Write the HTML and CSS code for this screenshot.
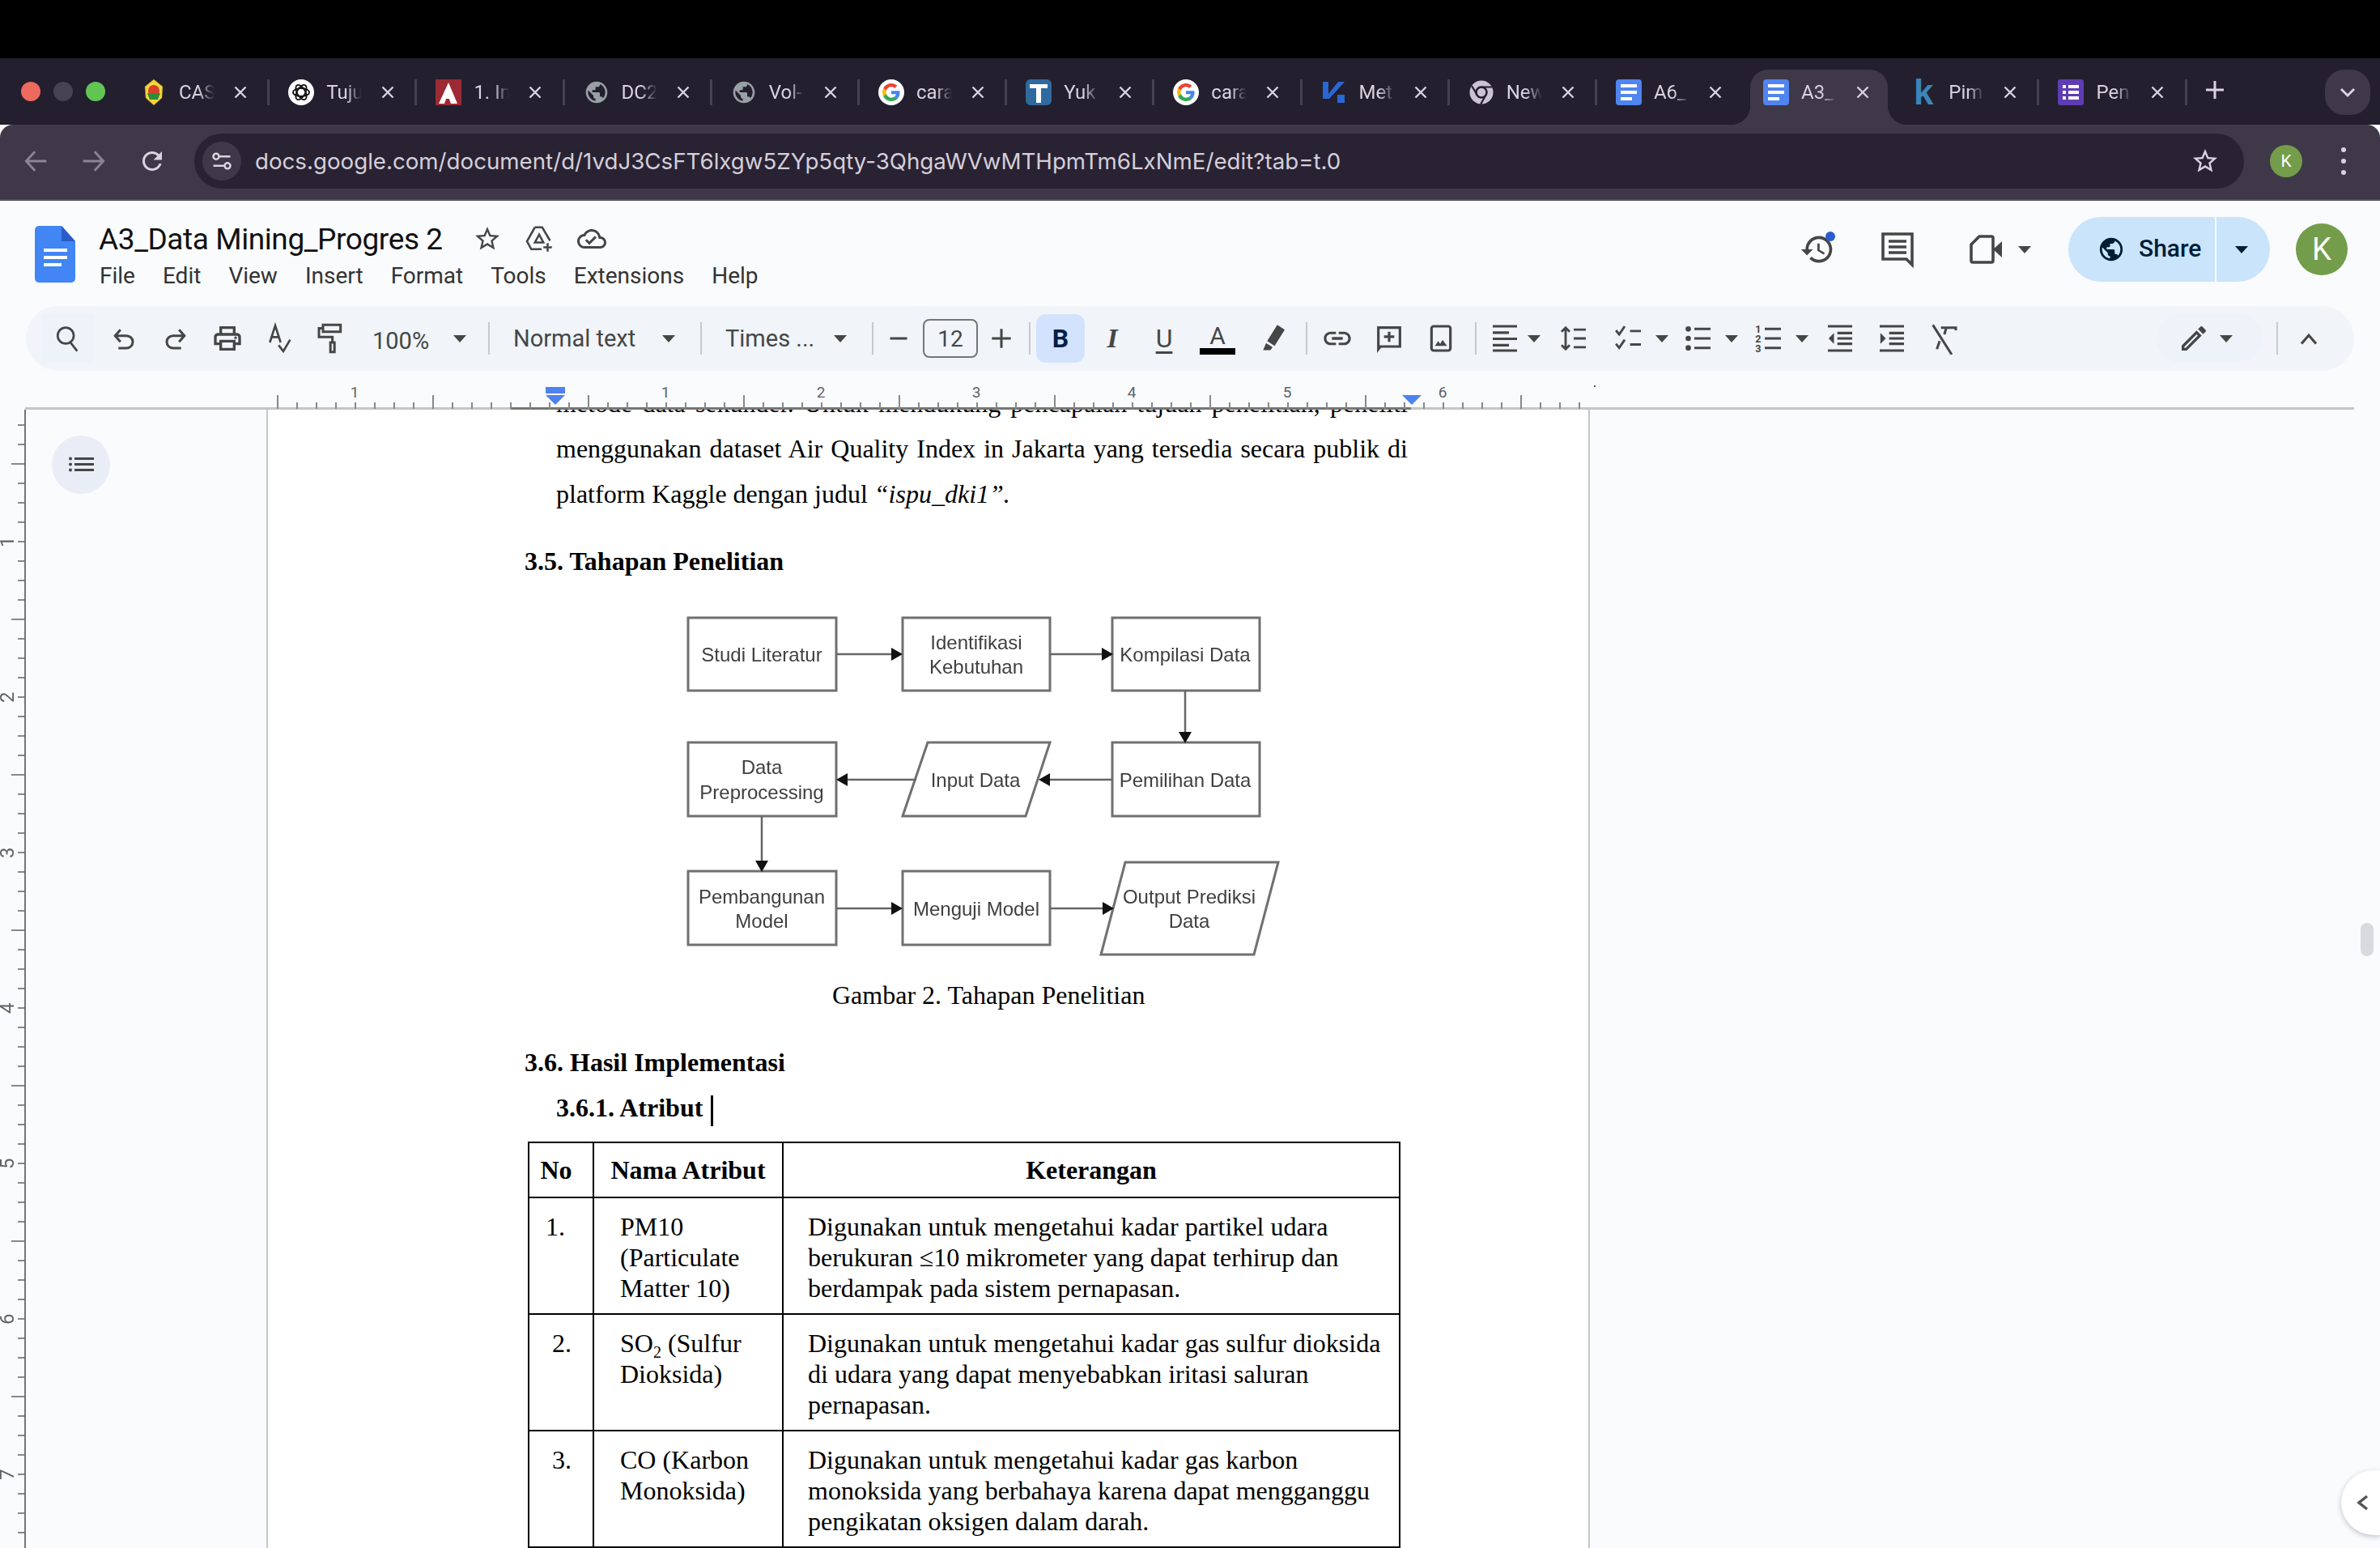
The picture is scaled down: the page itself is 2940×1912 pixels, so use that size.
FILE: index.html
```html
<!DOCTYPE html>
<html>
  <head>
    <title>A3_Data Mining_Progres 2</title>
    <link rel="stylesheet" href="styles.css">
  </head>
  <body>
    <svg class="sprites" width="0" height="0">
      <symbol id="i-public" viewBox="0 0 24 24"><path d="M12 2C6.48 2 2 6.48 2 12s4.48 10 10 10 10-4.48 10-10S17.52 2 12 2zm-1 17.93c-3.95-.49-7-3.85-7-7.93 0-.62.08-1.21.21-1.79L9 15v1c0 1.1.9 2 2 2v1.93zm6.9-2.54c-.26-.81-1-1.39-1.9-1.39h-1v-3c0-.55-.45-1-1-1H8v-2h2c.55 0 1-.45 1-1V7h2c1.1 0 2-.9 2-2v-.41c2.93 1.19 5 4.06 5 7.41 0 2.08-.8 3.97-2.1 5.39z"/></symbol>
      <symbol id="i-star" viewBox="0 0 24 24"><path d="M22 9.24l-7.19-.62L12 2 9.19 8.63 2 9.24l5.46 4.73L5.82 21 12 17.27 18.18 21l-1.63-7.03L22 9.24zM12 15.4l-3.76 2.27 1-4.28-3.32-2.88 4.38-.38L12 6.1l1.71 4.04 4.38.38-3.32 2.88 1 4.28L12 15.4z"/></symbol>
      <symbol id="i-g" viewBox="0 0 48 48"><path fill="#EA4335" d="M24 9.5c3.54 0 6.71 1.22 9.21 3.6l6.85-6.85C35.9 2.38 30.47 0 24 0 14.62 0 6.51 5.38 2.56 13.22l7.98 6.19C12.43 13.72 17.74 9.5 24 9.5z"/><path fill="#4285F4" d="M46.98 24.55c0-1.57-.15-3.09-.38-4.55H24v9.02h12.94c-.58 2.96-2.26 5.48-4.78 7.18l7.73 6c4.51-4.18 7.09-10.36 7.09-17.65z"/><path fill="#FBBC05" d="M10.53 28.59c-.48-1.45-.76-2.99-.76-4.59s.27-3.14.76-4.59l-7.98-6.19C.92 16.46 0 20.12 0 24c0 3.88.92 7.54 2.56 10.78l7.97-6.19z"/><path fill="#34A853" d="M24 48c6.48 0 11.93-2.13 16.12-5.81l-7.73-6c-2.15 1.45-4.92 2.3-8.39 2.3-6.26 0-11.57-4.22-13.47-9.91l-7.98 6.19C6.51 42.62 14.62 48 24 48z"/></symbol>
      <symbol id="i-docfav" viewBox="0 0 32 32"><rect width="32" height="32" rx="4" fill="#5084ee"/><path fill="#fff" d="M6 6h20v4H6zM6 14h20v4H6zM6 22h14v4H6z"/></symbol>
      <symbol id="i-drop" viewBox="0 0 16 9"><path d="M0 0h16L8 9z"/></symbol>
      <symbol id="i-undo" viewBox="0 0 24 24"><path fill="none" stroke="currentColor" stroke-width="1.8" d="M9.5 5.5 5.5 10l4 4.5M5.5 10H14a4.6 4.6 0 0 1 0 9.2H8"/></symbol>
      <symbol id="i-redo" viewBox="0 0 24 24"><path fill="none" stroke="currentColor" stroke-width="1.8" d="M14.5 5.5l4 4.5-4 4.5M18.5 10H10a4.6 4.6 0 0 0 0 9.2h6"/></symbol>
      <symbol id="i-search" viewBox="0 0 24 24"><path fill="none" stroke="currentColor" stroke-width="1.9" d="M10 2.500a7 7 0 1 0 0 14 7 7 0 0 0 0-14zM14.500 16l5.500 7"/></symbol>
      <symbol id="i-print" viewBox="0 0 24 24"><path d="M19 8h-1V3H6v5H5c-1.66 0-3 1.34-3 3v6h4v4h12v-4h4v-6c0-1.66-1.34-3-3-3zM8 5h8v3H8V5zm8 12v2H8v-4h8v2zm2-2v-2H6v2H4v-4c0-.55.45-1 1-1h14c.55 0 1 .45 1 1v4h-2z"/><circle cx="18" cy="11.5" r="1"/></symbol>
      <symbol id="i-spell" viewBox="0 0 24 24"><path fill="none" stroke="currentColor" stroke-width="1.6" d="M5 15 9 2.5 13 15M6.4 11h5.2M11.5 17l3.5 4.5 5-8.5"/></symbol>
      <symbol id="i-paint" viewBox="0 0 24 24"><path fill="none" stroke="currentColor" stroke-width="1.8" d="M6 2h13v5H6zM6 4.5H3v6.5h10v3.5M11.5 15h3v7h-3z"/></symbol>
      <symbol id="i-marker" viewBox="0 0 24 24"><path d="M15.5 2 21 5.5 13.5 17.5 8 14zM7.2 15.5l4.8 3-1.6 2.2H5z"/></symbol>
      <symbol id="i-link" viewBox="0 0 24 24"><path d="M3.9 12c0-1.71 1.39-3.1 3.1-3.1h4V7H7c-2.76 0-5 2.24-5 5s2.24 5 5 5h4v-1.9H7c-1.71 0-3.1-1.39-3.1-3.1zM8 13h8v-2H8v2zm9-6h-4v1.9h4c1.71 0 3.1 1.39 3.1 3.1s-1.39 3.1-3.1 3.1h-4V17h4c2.76 0 5-2.24 5-5s-2.24-5-5-5z"/></symbol>
      <symbol id="i-addcomment" viewBox="0 0 24 24"><path fill="none" stroke="currentColor" stroke-width="1.9" d="M4 4h16v14H5.5L4 20zM12 7v7.5M8.2 10.7h7.6"/></symbol>
      <symbol id="i-image" viewBox="0 0 24 24"><rect x="5" y="3" width="14" height="18" rx="1.6" fill="none" stroke="currentColor" stroke-width="1.9"/><path d="M7.5 17.5 10 14l1.4 2 1.8-3 3.3 4.5z"/></symbol>
      <symbol id="i-align" viewBox="0 0 24 24"><path fill="none" stroke="currentColor" stroke-width="1.9" d="M3 3h18M3 7.7h12M3 12.3h18M3 17h12M3 21h18"/></symbol>
      <symbol id="i-spacing" viewBox="0 0 24 24"><path fill="none" stroke="currentColor" stroke-width="1.7" d="M6 4v16M3 7l3-3 3 3M3 17l3 3 3-3M12 5.5h9M12 12h9M12 18.5h9"/></symbol>
      <symbol id="i-check" viewBox="0 0 24 24"><path fill="none" stroke="currentColor" stroke-width="1.7" d="M2.5 6l2.4 3L9 3M2.5 16l2.4 3L9 13M13 6.5h8M13 16.5h8"/></symbol>
      <symbol id="i-bullet" viewBox="0 0 24 24"><circle cx="4.5" cy="5" r="2"/><circle cx="4.5" cy="12" r="2"/><circle cx="4.5" cy="19" r="2"/><path fill="none" stroke="currentColor" stroke-width="1.8" d="M9 5h12M9 12h12M9 19h12"/></symbol>
      <symbol id="i-outdent" viewBox="0 0 24 24"><path fill="none" stroke="currentColor" stroke-width="1.9" d="M3 3h18M3 21h18M10 8h11M10 12h11M10 16h11"/><path d="M7.5 8v8L3.5 12z"/></symbol>
      <symbol id="i-indent" viewBox="0 0 24 24"><path fill="none" stroke="currentColor" stroke-width="1.9" d="M3 3h18M3 21h18M10 8h11M10 12h11M10 16h11"/><path d="M3.5 8v8l4-4z"/></symbol>
      <symbol id="i-clear" viewBox="0 0 24 24"><path fill="none" stroke="currentColor" stroke-width="1.8" d="M4 2l14 22M10 4h11v2M14 4l-1.5 5M9 14l-2 6"/></symbol>
      <symbol id="i-pencil" viewBox="0 0 24 24"><path d="M14.06 9.02l.92.92L5.92 19H5v-.92l9.06-9.06M17.66 3c-.25 0-.51.1-.7.29l-1.83 1.83 3.75 3.75 1.83-1.83c.39-.39.39-1.02 0-1.41l-2.34-2.34c-.2-.2-.45-.29-.71-.29zm-3.6 3.19L3 17.25V21h3.75L17.81 9.94l-3.75-3.75z"/></symbol>
      <symbol id="i-close" viewBox="0 0 16 16"><path fill="none" stroke="currentColor" stroke-width="2.4" d="M1.5 1.5l13 13M14.5 1.5l-13 13"/></symbol>
    </svg>

    <div class="os-bar"></div>

    <!-- tabs -->
    <div class="tabstrip">
      <div class="lights">
        <span class="light red"></span>
        <span class="light grey"></span>
        <span class="light green"></span>
      </div>
      <div class="tab">
        <svg class="fav" viewBox="0 0 32 32"><path fill="#f2d63c" stroke="#8a7a20" stroke-width=".6" d="M16 0l11 9-1 14-10 9-10-9L5 9z"/><circle cx="16" cy="14" r="7" fill="#d8402c"/><path fill="#2f8a3c" d="M8 17h16l-3 8H11z"/></svg>
        <span class="tab-title">CAS</span>
        <svg class="tab-x"><use href="#i-close"/></svg>
      </div>
      <div class="tab">
        <svg class="fav" viewBox="0 0 32 32"><circle cx="16" cy="16" r="16" fill="#fff"/><g fill="none" stroke="#111" stroke-width="1.8"><ellipse cx="16" cy="16" rx="10" ry="5"/><ellipse cx="16" cy="16" rx="10" ry="5" transform="rotate(60 16 16)"/><ellipse cx="16" cy="16" rx="10" ry="5" transform="rotate(120 16 16)"/></g></svg>
        <span class="tab-title">Tuju</span>
        <svg class="tab-x"><use href="#i-close"/></svg>
      </div>
      <div class="tab">
        <svg class="fav" viewBox="0 0 32 32"><rect width="32" height="32" fill="#9c2a34"/><path fill="#fff" d="M16 4l11 26h-8l-2.2-6H10l3-6h2l1-3-5 15H4z"/></svg>
        <span class="tab-title">1. In</span>
        <svg class="tab-x"><use href="#i-close"/></svg>
      </div>
      <div class="tab">
        <svg class="fav globe"><use href="#i-public"/></svg>
        <span class="tab-title">DC2</span>
        <svg class="tab-x"><use href="#i-close"/></svg>
      </div>
      <div class="tab">
        <svg class="fav globe"><use href="#i-public"/></svg>
        <span class="tab-title">Vol-</span>
        <svg class="tab-x"><use href="#i-close"/></svg>
      </div>
      <div class="tab">
        <svg class="fav" viewBox="0 0 32 32"><circle cx="16" cy="16" r="16" fill="#fff"/><use href="#i-g" x="5" y="5" width="22" height="22"/></svg>
        <span class="tab-title">cara</span>
        <svg class="tab-x"><use href="#i-close"/></svg>
      </div>
      <div class="tab">
        <svg class="fav" viewBox="0 0 32 32"><rect width="32" height="32" rx="6" fill="#2f6a9e"/><path fill="#fff" d="M5 6h22v5h-8v18h-6V11H5z"/></svg>
        <span class="tab-title">Yuk</span>
        <svg class="tab-x"><use href="#i-close"/></svg>
      </div>
      <div class="tab">
        <svg class="fav" viewBox="0 0 32 32"><circle cx="16" cy="16" r="16" fill="#fff"/><use href="#i-g" x="5" y="5" width="22" height="22"/></svg>
        <span class="tab-title">cara</span>
        <svg class="tab-x"><use href="#i-close"/></svg>
      </div>
      <div class="tab">
        <svg class="fav" viewBox="0 0 32 32"><path fill="#2a66d4" d="M2 3h7v15l12-15h8L10 24H2zM20 19h9v10h-9z"/></svg>
        <span class="tab-title">Met</span>
        <svg class="tab-x"><use href="#i-close"/></svg>
      </div>
      <div class="tab">
        <svg class="fav" viewBox="0 0 32 32"><circle cx="16" cy="16" r="14.5" fill="#c9c3d5"/><circle cx="16" cy="16" r="6.5" fill="#c9c3d5" stroke="#231f2e" stroke-width="2.5"/><path stroke="#231f2e" stroke-width="2.2" d="M16 9.5h13M21 20l-6 11M10.5 19L4 8"/></svg>
        <span class="tab-title">New</span>
        <svg class="tab-x"><use href="#i-close"/></svg>
      </div>
      <div class="tab no-sep">
        <svg class="fav"><use href="#i-docfav"/></svg>
        <span class="tab-title">A6_</span>
        <svg class="tab-x"><use href="#i-close"/></svg>
      </div>
      <div class="tab active">
        <svg class="fav"><use href="#i-docfav"/></svg>
        <span class="tab-title">A3_</span>
        <svg class="tab-x"><use href="#i-close"/></svg>
      </div>
      <div class="tab">
        <span class="fav fav-k">k</span>
        <span class="tab-title">Pim</span>
        <svg class="tab-x"><use href="#i-close"/></svg>
      </div>
      <div class="tab">
        <svg class="fav" viewBox="0 0 32 32"><rect width="32" height="32" rx="3" fill="#5e3db3"/><path fill="#fff" d="M6 7h4v4H6zM13 7h13v4H13zM6 14h4v4H6zM13 14h13v4H13zM6 21h4v4H6zM13 21h13v4H13z"/></svg>
        <span class="tab-title">Pen</span>
        <svg class="tab-x"><use href="#i-close"/></svg>
      </div>
      <span class="new-tab">
        <svg width="24" height="24" viewBox="0 0 24 24"><path fill="none" stroke="currentColor" stroke-width="3" d="M12 1v22M1 12h22"/></svg>
      </span>
      <span class="tab-search">
        <svg width="20" height="14" viewBox="0 0 20 14"><path fill="none" stroke="currentColor" stroke-width="3" d="M2 3l8 8 8-8"/></svg>
      </span>
    </div>

    <!-- address bar -->
    <div class="browserbar">
      <span class="nav-btn off"><svg width="40" height="40" viewBox="0 0 24 24"><path fill="none" stroke="currentColor" stroke-width="1.7" d="M20 12H5M11.5 5 5 12l6.5 7"/></svg></span>
      <span class="nav-btn off"><svg width="40" height="40" viewBox="0 0 24 24"><path fill="none" stroke="currentColor" stroke-width="1.7" d="M4 12h15M12.500 5 19 12l-6.500 7"/></svg></span>
      <span class="nav-btn"><svg width="36" height="36" viewBox="0 0 24 24" fill="currentColor"><path d="M17.65 6.35C16.2 4.9 14.21 4 12 4c-4.42 0-7.99 3.58-7.99 8s3.57 8 7.99 8c3.73 0 6.84-2.55 7.73-6h-2.08c-.82 2.33-3.04 4-5.65 4-3.31 0-6-2.69-6-6s2.69-6 6-6c1.66 0 3.14.69 4.22 1.78L13 11h7V4l-2.35 2.35z"/></svg></span>
      <div class="omnibox">
        <span class="site-info">
          <svg width="28" height="28" viewBox="0 0 24 24"><path fill="none" stroke="currentColor" stroke-width="2.2" d="M9.500 7H21M3 17h11.500"/><circle cx="6" cy="7" r="3" fill="none" stroke="currentColor" stroke-width="2.200"/><circle cx="18" cy="17" r="3" fill="none" stroke="currentColor" stroke-width="2.200"/></svg>
        </span>
        <span class="url">docs.google.com/document/d/1vdJ3CsFT6lxgw5ZYp5qty-3QhgaWVwMTHpmTm6LxNmE/edit?tab=t.0</span>
        <svg class="omni-star"><use href="#i-star"/></svg>
      </div>
      <span class="chrome-avatar">K</span>
      <span class="kebab"><i></i><i></i><i></i></span>
    </div>

    <!-- docs header -->
    <div class="docs-header">
      <svg class="docs-logo" viewBox="0 0 50 70">
        <path fill="#4285f4" d="M5 0h28l17 19v46a5 5 0 0 1-5 5H5a5 5 0 0 1-5-5V5a5 5 0 0 1 5-5z"/>
        <path fill="#2a5bc8" d="M33 0l17 19H33z"/>
        <path fill="#fff" d="M11 28h29v4H11zM11 37h29v4H11zM11 46h22v4H11z"/>
      </svg>
      <div class="title-col">
        <div class="title-row">
          <span class="doc-title">A3_Data Mining_Progres 2</span>
          <svg class="title-ico star"><use href="#i-star"/></svg>
          <svg class="title-ico drive" viewBox="0 0 24 24"><path fill="none" stroke="currentColor" stroke-width="1.700" d="M8.500 2.500h6l6.500 11M8.500 2.500 2 14l3.500 6.500H14M12 8.500 8.500 15h7zM19 15.500v7M15.500 19h7"/></svg>
          <svg class="title-ico cloud" viewBox="0 0 24 24"><path d="M19.350 10.040C18.670 6.590 15.640 4 12 4 9.110 4 6.600 5.640 5.350 8.040 2.340 8.360 0 10.910 0 14c0 3.310 2.690 6 6 6h13c2.760 0 5-2.240 5-5 0-2.640-2.050-4.780-4.650-4.960zM19 18H6c-2.210 0-4-1.790-4-4 0-2.050 1.530-3.760 3.560-3.970l1.070-.11.5-.95C8.080 7.140 9.940 6 12 6c2.620 0 4.880 1.860 5.390 4.430l.3 1.500 1.530.11c1.560.1 2.780 1.410 2.780 2.960 0 1.650-1.350 3-3 3zm-9-3.820l-2.090-2.090L6.500 13.500 10 17l6.010-6.010-1.410-1.410z"/></svg>
        </div>
        <nav class="menu">
          <span>File</span><span>Edit</span><span>View</span><span>Insert</span><span>Format</span><span>Tools</span><span>Extensions</span><span>Help</span>
        </nav>
      </div>
      <div class="header-right">
        <span class="hist">
          <svg width="44" height="44" viewBox="0 0 24 24"><path d="M13 3c-4.970 0-9 4.030-9 9H1l3.890 3.890.07.14L9 12H6c0-3.870 3.130-7 7-7s7 3.130 7 7-3.130 7-7 7c-1.930 0-3.680-.79-4.940-2.060l-1.420 1.420C8.270 19.990 10.510 21 13 21c4.970 0 9-4.030 9-9s-4.030-9-9-9zm-1 5v5l4.280 2.540.72-1.210-3.500-2.080V8H12z"/></svg>
          <i class="hist-dot"></i>
        </span>
        <svg class="hdr-comment" viewBox="0 0 24 24"><path fill="none" stroke="currentColor" stroke-width="1.800" d="M3 2.500h18v19l-3.500-3.500H3zM6.500 7h11M6.500 10.500h11M6.500 14h11"/></svg>
        <svg class="hdr-video" viewBox="0 0 24 24"><path fill="none" stroke="currentColor" stroke-width="1.800" d="M8 4h7.500a1 1 0 0 1 1 1v14a1 1 0 0 1-1 1H4a1 1 0 0 1-1-1V9z"/><path d="M16.500 12 22 7v10z"/></svg>
        <svg class="drop hdr-drop"><use href="#i-drop"/></svg>
        <div class="share">
          <span class="share-main">
            <svg width="34" height="34"><use href="#i-public"/></svg>
            <span class="share-label">Share</span>
          </span>
          <span class="share-more"><svg class="drop"><use href="#i-drop"/></svg></span>
        </div>
        <span class="docs-avatar">K</span>
      </div>
    </div>

    <!-- formatting toolbar -->
    <div class="toolbar">
      <span class="tb tb-search"><svg class="ico ico-search"><use href="#i-search"/></svg></span>
      <span class="tb m5"><svg class="ico"><use href="#i-undo"/></svg></span>
      <span class="tb"><svg class="ico"><use href="#i-redo"/></svg></span>
      <span class="tb"><svg class="ico"><use href="#i-print"/></svg></span>
      <span class="tb"><svg class="ico"><use href="#i-spell"/></svg></span>
      <span class="tb"><svg class="ico"><use href="#i-paint"/></svg></span>
      <span class="select sel-zoom"><span class="zoom-val">100%</span><svg class="drop"><use href="#i-drop"/></svg></span>
      <i class="sep"></i>
      <span class="select sel-style">Normal text<svg class="drop"><use href="#i-drop"/></svg></span>
      <i class="sep"></i>
      <span class="select sel-font">Times ...<svg class="drop"><use href="#i-drop"/></svg></span>
      <i class="sep"></i>
      <span class="tb size-btn w61"><svg width="28" height="28" viewBox="0 0 24 24"><path fill="none" stroke="currentColor" stroke-width="2.600" d="M3 12h18"/></svg></span>
      <span class="size-box">12</span>
      <span class="tb size-btn w58"><svg width="28" height="28" viewBox="0 0 24 24"><path fill="none" stroke="currentColor" stroke-width="2.600" d="M12 2v20M2 12h20"/></svg></span>
      <i class="sep"></i>
      <span class="tb-bold">B</span>
      <span class="tb tb-italic m2">I</span>
      <span class="tb tb-under">U</span>
      <span class="tb tb-color m2"><span>A</span><i class="color-bar"></i></span>
      <span class="tb m4"><svg class="ico"><use href="#i-marker"/></svg></span>
      <i class="sep m9"></i>
      <span class="tb m5"><svg class="ico"><use href="#i-link"/></svg></span>
      <span class="tb"><svg class="ico"><use href="#i-addcomment"/></svg></span>
      <span class="tb"><svg class="ico"><use href="#i-image"/></svg></span>
      <i class="sep m10"></i>
      <span class="tb-drop m9"><svg class="ico"><use href="#i-align"/></svg><svg class="drop m2"><use href="#i-drop"/></svg></span>
      <span class="tb m9"><svg class="ico"><use href="#i-spacing"/></svg></span>
      <span class="tb-drop m10"><svg class="ico"><use href="#i-check"/></svg><svg class="drop m7"><use href="#i-drop"/></svg></span>
      <span class="tb-drop m11"><svg class="ico"><use href="#i-bullet"/></svg><svg class="drop m7"><use href="#i-drop"/></svg></span>
      <span class="tb-drop m12">
        <svg class="ico" viewBox="0 0 24 24"><path fill="none" stroke="currentColor" stroke-width="1.8" d="M9 5h12M9 12h12M9 19h12"/><text x="2" y="8" class="mini">1</text><text x="2" y="15" class="mini">2</text><text x="2" y="22" class="mini">3</text></svg>
        <svg class="drop m7"><use href="#i-drop"/></svg>
      </span>
      <span class="tb m7"><svg class="ico"><use href="#i-outdent"/></svg></span>
      <span class="tb"><svg class="ico"><use href="#i-indent"/></svg></span>
      <span class="tb"><svg class="ico"><use href="#i-clear"/></svg></span>
      <div class="toolbar-right">
        <span class="mode-btn"><svg class="ico"><use href="#i-pencil"/></svg><svg class="drop"><use href="#i-drop"/></svg></span>
        <i class="sep"></i>
        <span class="tb"><svg width="26" height="18" viewBox="0 0 20 14"><path fill="none" stroke="currentColor" stroke-width="2.400" d="M3 12l7-8 7 8"/></svg></span>
      </div>
    </div>

    <!-- horizontal ruler -->
    <div class="ruler">
      <div class="ruler-scale">
        <span>1</span><span></span><span>1</span><span>2</span><span>3</span><span>4</span><span>5</span><span>6</span>
      </div>
      <i class="indent-bar"></i>
      <i class="tri tri-left"></i>
      <i class="tri tri-right"></i>
      <i class="ruler-dot"></i>
    </div>

    <div class="doc-area">
      <div class="v-ruler">
        <span>1</span><span>2</span><span>3</span><span>4</span><span>5</span><span>6</span><span>7</span>
      </div>
      <div class="gutter">
        <span class="outline-btn">
          <svg width="32" height="20" viewBox="0 0 32 20"><path fill="#444746" d="M8 1h24v3H8zM8 8h24v3H8zM8 15h24v3H8z"/><circle cx="3" cy="2.500" r="2"  fill="#444746"/><circle cx="3" cy="9.500" r="2" fill="#444746"/><circle cx="3" cy="16.500" r="2" fill="#444746"/></svg>
        </span>
      </div>
      <div class="page">
        <p class="body-text">metode data sekunder. Untuk mendukung pencapaian tujuan penelitian, peneliti menggunakan dataset Air Quality Index in Jakarta yang tersedia secara publik di platform Kaggle dengan judul <em>“ispu_dki1”.</em></p>
        <h3 class="h-section first">3.5. Tahapan Penelitian</h3>
        <svg class="figure" viewBox="820 740 770 450" width="770" height="450">
          <g fill="#fff" stroke="#707070" stroke-width="3">
            <rect x="850" y="763" width="183" height="90"/>
            <rect x="1115" y="763" width="182" height="90"/>
            <rect x="1374" y="763" width="182" height="90"/>
            <rect x="850" y="917" width="183" height="91"/>
            <path d="M1146 917h151l-30 91h-152z"/>
            <rect x="1374" y="917" width="182" height="91"/>
            <rect x="850" y="1076" width="183" height="91"/>
            <rect x="1115" y="1076" width="182" height="91"/>
            <path d="M1390 1065h189l-30 114h-189z"/>
          </g>
          <g stroke="#666" stroke-width="2.500" fill="none">
            <path d="M1033 808h70M1297 808h65M1464 853v52M1374 963h-78M1132 963h-86M941 1008v56M1033 1122h70M1297 1122h66"/>
          </g>
          <g fill="#111">
            <path d="M1115 808l-14-8v16zM1375 808l-14-8v16zM1464 918l-8-14h16zM1283 963l14-8v16zM1033 963l14-8v16zM941 1077l-8-14h16zM1115 1122l-14-8v16zM1376 1122l-14-8v16z"/>
          </g>
          <g class="fig-text">
            <text x="941" y="817">Studi Literatur</text>
            <text x="1206" y="802">Identifikasi</text>
            <text x="1206" y="832">Kebutuhan</text>
            <text x="1464" y="817">Kompilasi Data</text>
            <text x="941" y="956">Data</text>
            <text x="941" y="987">Preprocessing</text>
            <text x="1205" y="972">Input Data</text>
            <text x="1464" y="972">Pemilihan Data</text>
            <text x="941" y="1116">Pembangunan</text>
            <text x="941" y="1146">Model</text>
            <text x="1206" y="1131">Menguji Model</text>
            <text x="1469" y="1116">Output Prediksi</text>
            <text x="1469" y="1146">Data</text>
          </g>
        </svg>
        <p class="caption">Gambar 2. Tahapan Penelitian</p>
        <h3 class="h-section second">3.6. Hasil Implementasi</h3>
        <h3 class="h-sub">3.6.1. Atribut <i class="caret"></i></h3>
        <table class="attr-table">
          <tr class="head">
            <th class="c-no">No</th>
            <th class="c-name">Nama Atribut</th>
            <th class="c-desc">Keterangan</th>
          </tr>
          <tr>
            <td class="c-no n1">1.</td>
            <td class="c-name">PM10<br>(Particulate<br>Matter 10)</td>
            <td class="c-desc">Digunakan untuk mengetahui kadar partikel udara berukuran ≤10 mikrometer yang dapat terhirup dan berdampak pada sistem pernapasan.</td>
          </tr>
          <tr>
            <td class="c-no n2">2.</td>
            <td class="c-name">SO<sub>2</sub> (Sulfur<br>Dioksida)</td>
            <td class="c-desc">Digunakan untuk mengetahui kadar gas sulfur dioksida di udara yang dapat menyebabkan iritasi saluran pernapasan.</td>
          </tr>
          <tr>
            <td class="c-no n2">3.</td>
            <td class="c-name">CO (Karbon<br>Monoksida)</td>
            <td class="c-desc">Digunakan untuk mengetahui kadar gas karbon monoksida yang berbahaya karena dapat mengganggu pengikatan oksigen dalam darah.</td>
          </tr>
        </table>
      </div>
      <i class="scroll-thumb"></i>
      <span class="side-toggle">
        <svg width="18" height="24" viewBox="0 0 18 24"><path fill="none" stroke="#55565c" stroke-width="3.500" d="M14 4 4 12l10 8"/></svg>
      </span>
    </div>
  </body>
</html>
```

FILE: styles.css
```css
* {
  box-sizing: border-box;
}

html,
body {
  margin: 0;
  width: 2940px;
  height: 1912px;
  overflow: hidden;
  background: #f9fbfd;
  font-family: Roboto, "Liberation Sans", sans-serif;
}

i {
  font-style: normal;
}

.sprites {
  position: absolute;
}

.mini {
  font: 700 7.5px Roboto, sans-serif;
}

.os-bar {
  height: 72px;
  background: #000;
}

/* tabs */
.tabstrip {
  display: flex;
  height: 82px;
  padding-top: 14px;
  background: #231f2e;
  color: #d8d3de;
}

.lights {
  display: flex;
  gap: 16px;
  width: 151px;
  padding: 15px 0 0 26px;
}

.light {
  width: 24px;
  height: 24px;
  border-radius: 50%;
}

.red {
  background: #ed6a5e;
}

.grey {
  background: #46424f;
}

.green {
  background: #61c554;
}

.tab {
  position: relative;
  display: flex;
  flex: none;
  align-items: flex-start;
  width: 182.2px;
  height: 68px;
  padding: 12px 0 0 23px;
}

.tab::after {
  content: "";
  position: absolute;
  top: 12px;
  right: 0;
  width: 3px;
  height: 32px;
  background: #45414e;
}

.tab.no-sep::after {
  display: none;
}

.tab.active::before {
  content: "";
  position: absolute;
  top: 0;
  left: 7px;
  right: 5px;
  bottom: 0;
  z-index: 0;
  background: #3f3848;
  border-radius: 22px 22px 0 0;
}

.tab.active::after {
  top: auto;
  bottom: 0;
  left: -17px;
  right: -19px;
  width: auto;
  height: 24px;
  background:
    radial-gradient(circle at 0 0, transparent 24px, #3f3848 24.5px) left top / 24px 24px no-repeat,
    radial-gradient(circle at 100% 0, transparent 24px, #3f3848 24.5px) right top / 24px 24px no-repeat;
}

.fav {
  position: relative;
  flex: none;
  width: 32px;
  height: 32px;
}

.globe {
  fill: #98a0a6;
}

.fav-k {
  color: #3b85b8;
  font: 700 44px/32px "Liberation Sans", sans-serif;
  text-align: center;
}

.tab-title {
  position: relative;
  width: 44px;
  margin-left: 15px;
  overflow: hidden;
  font-size: 24px;
  line-height: 32px;
  white-space: nowrap;
  -webkit-mask-image: linear-gradient(to right, #000 55%, transparent);
  mask-image: linear-gradient(to right, #000 55%, transparent);
}

.tab-x {
  position: relative;
  width: 16px;
  height: 16px;
  margin: 8px 0 0 24px;
}

.new-tab {
  display: flex;
  justify-content: center;
  width: 68px;
  padding-top: 13px;
}

.tab-search {
  display: flex;
  align-items: center;
  justify-content: center;
  width: 56px;
  height: 56px;
  margin-left: auto;
  margin-right: 12px;
  background: #3f3848;
  border-radius: 24px;
}

/* address bar */
.browserbar {
  display: flex;
  align-items: center;
  height: 94px;
  padding: 0 25px 2px 8px;
  background: #3f3848;
  border-bottom: 2px solid #55515a;
  border-radius: 16px 16px 0 0;
  color: #d8d3de;
}

.nav-btn {
  display: flex;
  align-items: center;
  justify-content: center;
  width: 72px;
}

.nav-btn.off {
  color: #8a8593;
}

.omnibox {
  display: flex;
  flex: 1;
  align-items: center;
  height: 68px;
  margin-left: 16px;
  padding: 0 30px 0 10px;
  background: #292233;
  border-radius: 34px;
}

.site-info {
  display: flex;
  align-items: center;
  justify-content: center;
  width: 48px;
  height: 48px;
  background: #3f3848;
  border-radius: 50%;
}

.url {
  margin-left: 17px;
  font-family: Inter, sans-serif;
  font-size: 27.7px;
  white-space: nowrap;
  color: #d4cfd9;
}

.omni-star {
  width: 36px;
  height: 36px;
  margin-left: auto;
  fill: #d8d3de;
}

.chrome-avatar {
  display: flex;
  align-items: center;
  justify-content: center;
  width: 40px;
  height: 40px;
  margin-left: 32px;
  background: #739d4a;
  border-radius: 50%;
  color: #fff;
  font-size: 21px;
}

.kebab {
  display: flex;
  flex-direction: column;
  align-items: center;
  gap: 8px;
  width: 40px;
  margin-left: 31px;
}

.kebab i {
  width: 6px;
  height: 6px;
  background: #d8d3de;
  border-radius: 50%;
}

/* docs header */
.docs-header {
  display: flex;
  height: 130px;
  padding: 31px 40px 0 43px;
  color: #1f1f1f;
}

.docs-logo {
  flex: none;
  width: 50px;
  height: 70px;
}

.title-col {
  margin-left: 29px;
}

.title-row {
  display: flex;
  align-items: center;
  height: 42px;
  margin-top: -5px;
}

.doc-title {
  font-size: 37px;
  letter-spacing: -0.4px;
  white-space: nowrap;
  color: #111;
}

.title-ico {
  width: 36px;
  height: 36px;
  fill: #444746;
  color: #444746;
}

.star {
  margin-left: 37px;
}

.drive {
  margin-left: 28px;
}

.cloud {
  margin-left: 29px;
}

.menu {
  display: flex;
  gap: 34px;
  margin-top: 7px;
  margin-left: 1px;
  font-size: 28px;
  line-height: 36px;
  color: #333;
}

.header-right {
  display: flex;
  align-items: center;
  align-self: flex-start;
  height: 80px;
  margin-left: auto;
  margin-top: -11px;
  color: #444746;
  fill: #444746;
}

.hist {
  position: relative;
  display: flex;
}

.hist-dot {
  position: absolute;
  top: 0;
  right: 0;
  width: 12px;
  height: 12px;
  background: #2a5bd0;
  border-radius: 50%;
}

.hdr-comment {
  width: 48px;
  height: 48px;
  margin-left: 53px;
}

.hdr-video {
  width: 48px;
  height: 48px;
  margin-left: 61px;
}

.drop {
  flex: none;
  width: 16px;
  height: 9px;
  fill: #444746;
}

.hdr-drop {
  margin-left: 16px;
}

.share {
  display: flex;
  align-items: stretch;
  height: 80px;
  margin-left: 46px;
  background: #c9e4fb;
  border-radius: 40px;
  color: #001d35;
  fill: #001d35;
}

.share-main {
  display: flex;
  align-items: center;
  gap: 17px;
  width: 181px;
  padding-left: 36px;
  font-size: 30px;
  font-weight: 500;
}

.share-label {
  margin-top: -3px;
}

.share-more {
  display: flex;
  align-items: center;
  justify-content: center;
  width: 68px;
  padding-right: 4px;
  border-left: 2px solid #f9fbfd;
}

.share-more .drop {
  fill: #001d35;
}

.docs-avatar {
  display: flex;
  align-items: center;
  justify-content: center;
  width: 64px;
  height: 64px;
  margin-left: 32px;
  background: #739d4a;
  border-radius: 50%;
  color: #fff;
  font-size: 38px;
}

/* formatting toolbar */
.toolbar {
  display: flex;
  align-items: center;
  height: 80px;
  margin: 0 32px;
  padding: 0 24px 0 20px;
  background: #f1f4f9;
  border-radius: 40px;
  color: #444746;
  fill: #444746;
  font-size: 29px;
}

.tb {
  display: flex;
  flex: none;
  align-items: center;
  justify-content: center;
  width: 64px;
  height: 60px;
}

.tb-search {
  background: #eef2f9;
}

.ico {
  flex: none;
  width: 40px;
  height: 40px;
}

.ico-search {
  width: 34px;
  height: 34px;
}

.tb-drop {
  display: flex;
  align-items: center;
}

.tb-drop .ico {
  width: 40px;
  margin: 0 6px;
}

.sep {
  flex: none;
  width: 2px;
  height: 40px;
  margin: 0 0 0 5px;
  background: #c7c9cc;
}

.m1 { margin-left: 1px; }
.m2 { margin-left: 2px; }
.m4 { margin-left: 4px; }
.m5 { margin-left: 5px; }
.m6 { margin-left: 6px; }
.m7 { margin-left: 7px; }
.m9 { margin-left: 9px; }
.m10 { margin-left: 10px; }
.m11 { margin-left: 11px; }
.m12 { margin-left: 12px; }

.select {
  display: flex;
  flex: none;
  align-items: center;
  justify-content: space-between;
  white-space: nowrap;
}

.sel-zoom {
  width: 157px;
  padding: 0 22px 0 19px;
}

.zoom-val {
  margin-top: 6px;
}

.sel-style {
  width: 255px;
  padding: 0 26px 0 29px;
}

.sel-font {
  width: 205px;
  padding: 0 26px 0 29px;
}

.w61 {
  width: 61px;
}

.w58 {
  width: 58px;
}

.size-box {
  display: flex;
  flex: none;
  align-items: center;
  justify-content: center;
  width: 68px;
  height: 48px;
  border: 2px solid #747775;
  border-radius: 8px;
  font-size: 28px;
}

.tb-bold {
  display: flex;
  flex: none;
  align-items: center;
  justify-content: center;
  width: 60px;
  height: 60px;
  margin-left: 7px;
  background: #d3e3fd;
  border-radius: 12px;
  color: #041e49;
  font-size: 32px;
  font-weight: 700;
}

.tb-italic {
  color: #444746;
  font: italic 700 34px "Liberation Serif", serif;
}

.tb-under {
  text-decoration: underline;
  text-underline-offset: 5px;
  text-decoration-thickness: 3px;
  font-size: 32px;
}

.tb-color {
  flex-direction: column;
  font-size: 30px;
}

.tb-color span {
  line-height: 30px;
  margin-top: 2px;
}

.color-bar {
  width: 44px;
  height: 8px;
  background: #000;
}

.toolbar-right {
  display: flex;
  align-items: center;
  margin-left: auto;
}

.mode-btn {
  display: flex;
  align-items: center;
  width: 131px;
  height: 60px;
  padding-left: 26px;
  gap: 12px;
  background: #eef2f9;
  border-radius: 30px;
}

.toolbar-right .sep {
  margin: 0 6px 0 17px;
}

/* rulers */
.ruler {
  position: relative;
  height: 48px;
  background: linear-gradient(
      to right,
      transparent 31px,
      #c4c7c5 31px 631px,
      #757575 631px 1743px,
      #c4c7c5 1743px 2908px,
      transparent 2908px
    )
    left bottom / 100% 3px no-repeat;
}

.ruler-scale {
  display: flex;
  width: 1610px;
  height: 47px;
  margin-left: 342px;
  padding-top: 17px;
  color: #5f6368;
  font-size: 19px;
  line-height: 20px;
  background:
    repeating-linear-gradient(to right, #888 0 2px, transparent 2px 192px) left bottom / 100% 17px no-repeat,
    repeating-linear-gradient(to right, #888 0 2px, transparent 2px 24px) left bottom / 100% 8px no-repeat;
}

.ruler-scale span {
  flex: none;
  width: 192px;
  text-align: center;
}

.indent-bar {
  position: absolute;
  top: 20px;
  left: 674px;
  width: 24px;
  height: 8px;
  background: #4f82ee;
}

.tri {
  position: absolute;
  top: 30px;
  width: 0;
  height: 0;
  border-left: 12px solid transparent;
  border-right: 12px solid transparent;
  border-top: 12px solid #4f82ee;
}

.tri-left {
  left: 674px;
}

.tri-right {
  left: 1732px;
}

.ruler-dot {
  position: absolute;
  top: 18px;
  left: 1969px;
  width: 2px;
  height: 2px;
  background: #555;
}

.doc-area {
  position: relative;
  display: flex;
  height: 1406px;
  overflow: hidden;
}

.v-ruler {
  flex: none;
  display: flex;
  flex-direction: column;
  width: 32px;
  padding-top: 67px;
  border-right: 2px solid #757575;
  color: #5f6368;
  font-size: 24px;
  background:
    repeating-linear-gradient(to bottom, transparent 0 66px, #888 66px 68px, transparent 68px 192px) right top / 16px 100% no-repeat,
    repeating-linear-gradient(to bottom, transparent 0 18px, #888 18px 20px, transparent 20px 24px) right top / 8px 100% no-repeat;
}

.v-ruler span {
  flex: none;
  height: 192px;
  padding-left: 12px;
  line-height: 18px;
  writing-mode: vertical-rl;
  transform: rotate(180deg);
  text-align: center;
}

.gutter {
  flex: none;
  width: 297px;
  padding: 32px 0 0 32px;
}

.outline-btn {
  display: flex;
  align-items: center;
  justify-content: center;
  width: 72px;
  height: 72px;
  background: #e9eef6;
  border-radius: 50%;
}

/* document page */
.page {
  flex: none;
  width: 1635px;
  height: 1406px;
  padding-left: 317px;
  background: #fff;
  border-left: 2px solid #c4c7c5;
  border-right: 2px solid #c4c7c5;
  color: #000;
  font-family: "Liberation Serif", "Times New Roman", serif;
  font-size: 32px;
  line-height: 56px;
}

.body-text {
  width: 1052px;
  margin: -36px 0 0 39px;
  text-align: justify;
}

.h-section,
.h-sub {
  margin: 0;
  font-size: 32px;
  font-weight: 700;
}

.h-section.first {
  margin-top: 27px;
}

.figure {
  display: block;
  margin: 19px 0 11px 172px;
  filter: blur(0.7px);
}

.fig-text text {
  fill: #3f3f3f;
  font-family: "Liberation Sans", Arial, sans-serif;
  font-size: 24px;
  text-anchor: middle;
}

.caption {
  margin: 0;
  padding-left: 380px;
}

.h-section.second {
  margin-top: 27px;
}

.h-sub {
  margin: 0 0 0 39px;
}

.caret {
  display: inline-block;
  width: 3px;
  height: 38px;
  margin-left: 2px;
  vertical-align: middle;
  background: #000;
}

.attr-table {
  width: 1078px;
  margin: 14px 0 0 4px;
  table-layout: fixed;
  border-collapse: collapse;
  line-height: 38px;
}

.attr-table th,
.attr-table td {
  padding: 0;
  border: 2.5px solid #000;
  vertical-align: top;
}

.head th {
  height: 68px;
  vertical-align: middle;
}

.attr-table td {
  height: 144px;
  padding-top: 16px;
}

.c-no {
  width: 80px;
}

.c-name {
  width: 234px;
}

.attr-table th.c-no {
  padding-right: 12px;
}

.attr-table td.c-name {
  padding-left: 32px;
}

.attr-table td.c-desc {
  padding-left: 30px;
  padding-right: 18px;
}

.attr-table td.n1 {
  padding-left: 20px;
}

.attr-table td.n2 {
  padding-left: 28px;
}

sub {
  font-size: 20px;
  line-height: 0;
}

.scroll-thumb {
  position: absolute;
  top: 634px;
  right: 8px;
  width: 16px;
  height: 41px;
  background: #d8dadd;
  border-radius: 8px;
}

.side-toggle {
  position: absolute;
  top: 1310px;
  right: 0;
  display: flex;
  align-items: center;
  width: 48px;
  height: 80px;
  padding-left: 18px;
  background: #fff;
  border-radius: 40px 0 0 40px;
  box-shadow: 0 2px 6px rgba(60, 64, 67, 0.3);
}
```
